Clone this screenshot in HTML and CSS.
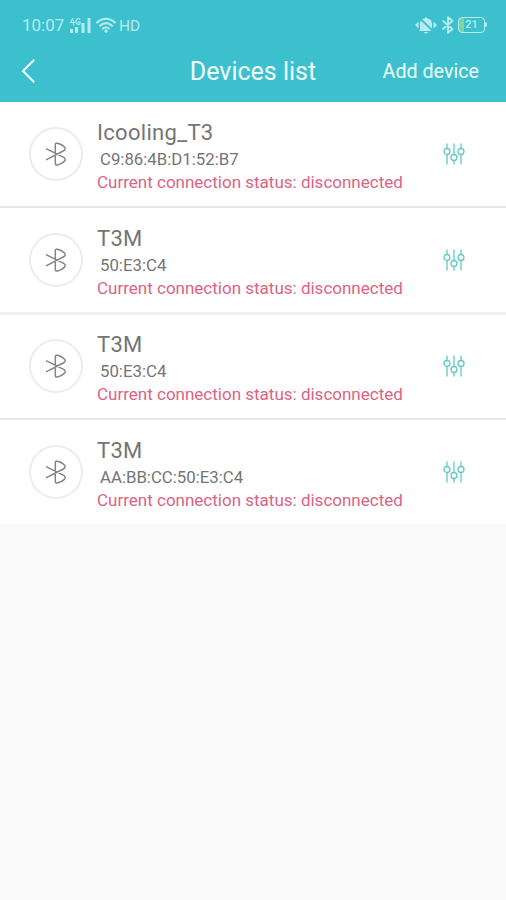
FILE: index.html
```html
<!DOCTYPE html>
<html lang="en">
<head>
  <meta charset="UTF-8" />
  <meta name="viewport" content="width=device-width, initial-scale=1.0"/>
  <title>Devices list</title>
  <link rel="stylesheet" href="styles.css">
</head>
<body>
  <!-- Shared icons -->
  <svg class="sprite" aria-hidden="true">
    <symbol id="bluetooth" viewBox="0 0 22 26">
      <path d="M1.5 7.8 18.2 16.2Q21.8 18.2 19 20.6 16.5 23 12.5 24 10.3 24.5 10.3 22.3V3.9Q10.3 1.8 12.5 2.3 16.5 3.2 19 5.6 21.8 8 18.2 10L1.5 18.6" />
    </symbol>
    <symbol id="sliders" viewBox="0 0 22 22">
      <path d="M4 1v4.5M4 11.5V21M11 1v10.5M11 17.5V21M18 1v4.5M18 11.5V21" />
      <circle cx="4" cy="8.5" r="3" /><circle cx="11" cy="14.5" r="3" /><circle cx="18" cy="8.5" r="3" />
    </symbol>
  </svg>

  <header>
    <div class="status-bar">
      <span class="time">10:07</span>
      <svg class="signal" viewBox="0 0 21 15">
        <path d="M0 11h3v4H0zM5 9h3v6H5zM11.5 5h3v10h-3zM17.5 0h3v15h-3z" />
        <path class="network" d="M3 0 .7 4.5H4.5M3.6 2.5V7M10 1.2C7-.3 6 2 6 3.5S7 7.2 10 6V4H8" />
      </svg>
      <svg class="wifi" viewBox="0 0 20 16">
        <path d="M1 5.5Q10-2 19 5.5M4 8.7Q10 3.5 16 8.7M7 11.6Q10 9 13 11.6" />
        <circle cx="10" cy="14" r="1.7" />
      </svg>
      <span class="hd">HD</span>
      <svg class="mute" viewBox="0 0 22 18">
        <path d="M5 13.5V8q0-5 4.5-5.5Q11 0 12.5 2.5 17 3 17 8v5.5l1 1.5H4zM8.5 16h5q-2.5 3-5 0z" />
        <path d="M3.5 5.5 0 9l3.5 3.5zM18.5 5.5 22 9l-3.5 3.5z" />
        <path class="slash" d="M4 1.5 19 16" />
      </svg>
      <svg class="bt-small" viewBox="0 0 12 18">
        <path d="M1 5 10.5 13 6 16.8V1.2L10.5 5 1 13" />
      </svg>
      <div class="battery"><span>21</span></div>
    </div>
    <div class="nav-bar">
      <svg class="back" viewBox="0 0 14 24"><path d="M12.5 1.5 2 12l10.5 10.5" /></svg>
      <h1>Devices list</h1>
      <a class="add">Add device</a>
    </div>
  </header>

  <main class="devices">
    <div class="device">
      <div class="avatar"><svg><use href="#bluetooth" /></svg></div>
      <div class="info">
        <h2>Icooling_T3</h2>
        <p class="mac">C9:86:4B:D1:52:B7</p>
        <p class="state">Current connection status: disconnected</p>
      </div>
      <svg class="settings"><use href="#sliders" /></svg>
    </div>
    <div class="device">
      <div class="avatar"><svg><use href="#bluetooth" /></svg></div>
      <div class="info">
        <h2>T3M</h2>
        <p class="mac">50:E3:C4</p>
        <p class="state">Current connection status: disconnected</p>
      </div>
      <svg class="settings"><use href="#sliders" /></svg>
    </div>
    <div class="device">
      <div class="avatar"><svg><use href="#bluetooth" /></svg></div>
      <div class="info">
        <h2>T3M</h2>
        <p class="mac">50:E3:C4</p>
        <p class="state">Current connection status: disconnected</p>
      </div>
      <svg class="settings"><use href="#sliders" /></svg>
    </div>
    <div class="device">
      <div class="avatar"><svg><use href="#bluetooth" /></svg></div>
      <div class="info">
        <h2>T3M</h2>
        <p class="mac">AA:BB:CC:50:E3:C4</p>
        <p class="state">Current connection status: disconnected</p>
      </div>
      <svg class="settings"><use href="#sliders" /></svg>
    </div>
  </main>
</body>
</html>
```

FILE: styles.css
```css
:root {
  --bg: #fafafa;
  --bar: #3dc0cd;
  --bar-text: #effdfd;
  --status: #b5ecef;
  --text: #757575;
  --danger: #dc6381;
  --accent: #62c9c5;
}
*{box-sizing:border-box;margin:0;padding:0;}
body{font-family:Roboto,sans-serif;background:var(--bg);color:var(--text);min-height:100vh;}
svg{display:block;flex:none;fill:none;stroke-linecap:round;stroke-linejoin:round;}
.sprite{width:0;height:0;position:absolute;}
header{height:102px;background:var(--bar);color:var(--bar-text);}

/* Status bar */
.status-bar{display:flex;align-items:center;height:50px;padding:0 21px 0 22px;color:var(--status);font-size:16px;line-height:20px;}
.time{width:42px;font-size:17px;white-space:nowrap;}
.signal{width:21px;height:15px;margin-left:6px;fill:var(--status);}
.signal .network{fill:none;stroke:var(--status);stroke-width:1.2;}
.wifi{width:20px;height:16px;margin-left:5px;stroke:var(--status);stroke-width:2;}
.wifi circle{fill:var(--status);stroke:none;}
.hd{margin-left:3px;font-size:15.5px;padding-top:1px;}
.mute{width:22px;height:18px;margin-left:auto;fill:var(--status);}
.mute .slash{stroke:var(--bar);stroke-width:1.8;}
.bt-small{width:12px;height:18px;margin-left:5px;stroke:var(--status);stroke-width:1.8;}
.battery{position:relative;width:27px;height:16px;margin-left:4px;border:1.5px solid var(--status);border-radius:4px;background:linear-gradient(90deg,#79d6a4 5px,transparent 5px);font-size:11px;line-height:14px;font-weight:500;text-align:center;}
.battery::after{content:"";position:absolute;right:-3px;top:4px;width:2px;height:5px;background:var(--status);border-radius:0 2px 2px 0;}

/* Title bar */
.nav-bar{display:grid;grid-template-columns:1fr auto 1fr;align-items:center;height:42px;padding:0 27px 0 21px;}
.back{width:14px;height:24px;stroke:var(--bar-text);stroke-width:2.2;}
h1{margin:2px -6px 0 0;font-size:25px;font-weight:400;line-height:28px;}
.add{justify-self:end;font-size:19.7px;}

/* Device rows */
.devices{background:#fff;}
.device{display:flex;align-items:center;height:106px;padding:2px 41px 2px 29px;border-bottom:2px solid #e8e8e8;}
.device:nth-child(2){height:107px;border-bottom:3px solid #f0f0f0;}
.device:nth-child(3){height:105px;padding-top:1px;}
.device:last-child{height:104px;border-bottom:none;}
.avatar{display:flex;align-items:center;justify-content:center;width:54px;height:54px;border:2px solid #ececec;border-radius:50%;}
.avatar svg{width:22px;height:26px;stroke:#858585;stroke-width:1.5;}
.info{flex:1;margin-left:14px;padding-top:4px;white-space:nowrap;}
h2{font-size:22px;font-weight:400;line-height:28px;letter-spacing:.3px;}
.mac{margin-left:3px;font-size:16.8px;line-height:24px;}
.state{font-size:17px;line-height:22px;color:var(--danger);}
.settings{width:22px;height:22px;stroke:var(--accent);stroke-width:1.3;}
```
